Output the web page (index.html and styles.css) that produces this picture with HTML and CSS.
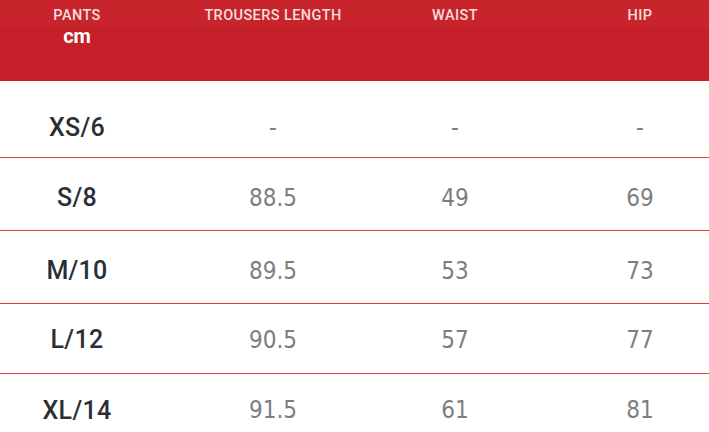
FILE: index.html
```html
<!DOCTYPE html>
<html>
<head>
<meta charset="utf-8">
<link rel="stylesheet" href="styles.css">
</head>
<body>
<div class="chart">
  <div class="head">
    <div class="hrow top">
      <div class="hc">PANTS</div>
      <div class="hc">TROUSERS LENGTH</div>
      <div class="hc">WAIST</div>
      <div class="hc last">HIP</div>
    </div>
    <div class="hrow unit">
      <div class="hc cm">cm</div>
    </div>
  </div>
  <div class="row first">
    <div class="size">XS/6</div><div class="val">-</div><div class="val">-</div><div class="val last">-</div>
  </div>
  <div class="row">
    <div class="size">S/8</div><div class="val">88.5</div><div class="val">49</div><div class="val last">69</div>
  </div>
  <div class="row">
    <div class="size">M/10</div><div class="val">89.5</div><div class="val">53</div><div class="val last">73</div>
  </div>
  <div class="row short">
    <div class="size">L/12</div><div class="val">90.5</div><div class="val">57</div><div class="val last">77</div>
  </div>
  <div class="row end">
    <div class="size">XL/14</div><div class="val">91.5</div><div class="val">61</div><div class="val last">81</div>
  </div>
</div>
</body>
</html>
```
FILE: styles.css
```css
html, body {
  margin: 0;
  padding: 0;
  background: #ffffff;
  overflow: hidden;
}
body {
  width: 709px;
  height: 432px;
  font-family: "DejaVu Sans Condensed", "DejaVu Sans", sans-serif;
  font-stretch: condensed;
}
.chart {
  width: 709px;
}
.head {
  background: #c5202a;
  height: 81px;
  color: #f4dede;
}
.hrow {
  display: grid;
  grid-template-columns: 154px 238px 126px 191px;
}
.hrow.top {
  background: #c8242c;
  height: 27px;
  align-items: start;
  padding-top: 7px;
  box-sizing: border-box;
  font-family: Roboto, "DejaVu Sans", sans-serif;
  font-stretch: normal;
  font-weight: 500;
  font-size: 14.5px;
  letter-spacing: 0.4px;
  line-height: 18px;
}
.hc {
  text-align: center;
}
.last {
  padding-left: 53px;
}
.cm {
  color: #ffffff;
  font-family: Roboto, "DejaVu Sans", sans-serif;
  font-stretch: normal;
  font-weight: bold;
  font-size: 20px;
  line-height: 20px;
  margin-top: -1px;
}
.row {
  display: grid;
  grid-template-columns: 154px 238px 126px 191px;
  align-items: center;
  height: 73px;
  border-bottom: 1px solid #dd3a42;
  box-sizing: border-box;
  padding-top: 7px;
}
.row.first {
  height: 77px;
  padding-top: 17px;
}
.row.short {
  height: 70px;
  padding-top: 2px;
}
.row.end {
  padding-top: 0;
}
.size {
  text-align: center;
  font-family: Roboto, "DejaVu Sans", sans-serif;
  font-stretch: normal;
  font-size: 25px;
  font-weight: 500;
  letter-spacing: 0.3px;
  color: #2a2f36;
}
.val {
  text-align: center;
  font-size: 24px;
  font-weight: 300;
  color: #7b7e82;
}
```
